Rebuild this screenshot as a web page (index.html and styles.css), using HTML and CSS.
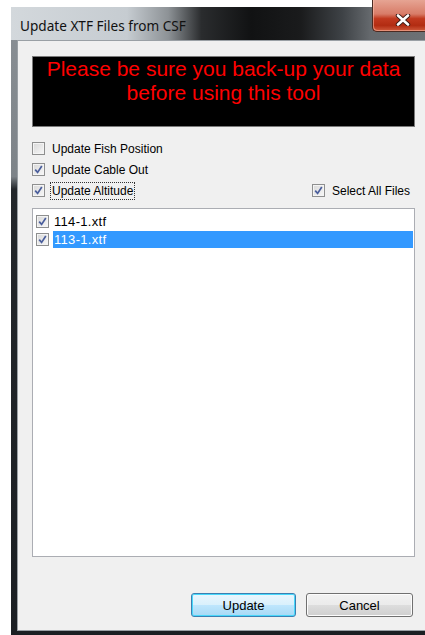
FILE: index.html
```html
<!DOCTYPE html>
<html>
<head>
<meta charset="utf-8">
<title>Update XTF Files from CSF</title>
<link rel="stylesheet" href="styles.css">
</head>
<body>
<div class="window">
  <div class="titlebar">
    <svg class="glass" width="414" height="33" viewBox="0 0 414 33" preserveAspectRatio="none">
      <defs>
        <linearGradient id="glassFill" x1="0" y1="0" x2="1" y2="0">
          <stop offset="0" stop-color="#d3d8dc"/>
          <stop offset="0.28" stop-color="#c6ccd1"/>
          <stop offset="0.38" stop-color="#8d9296"/>
          <stop offset="0.46" stop-color="#2a2c2e"/>
          <stop offset="0.58" stop-color="#111213"/>
          <stop offset="0.70" stop-color="#1a1b1c"/>
          <stop offset="0.80" stop-color="#3e4246"/>
          <stop offset="0.87" stop-color="#666a6e"/>
          <stop offset="1" stop-color="#6d7175"/>
        </linearGradient>
      </defs>
      <rect x="0" y="0" width="414" height="33" fill="url(#glassFill)"/>
    </svg>
    <span class="title">Update XTF Files from CSF</span>
    <div class="close">
      <svg width="16" height="12" viewBox="0 0 16 12">
        <path d="M3 1.5 L13 10.5 M13 1.5 L3 10.5" stroke="#3a1a14" stroke-width="4.4" stroke-linecap="round"/>
        <path d="M3 1.5 L13 10.5 M13 1.5 L3 10.5" stroke="#ffffff" stroke-width="2.6" stroke-linecap="round"/>
      </svg>
    </div>
  </div>
  <div class="client">
    <div class="banner">Please be sure you back-up your data<br>before using this tool</div>

    <div class="options">
      <div class="row">
        <label class="check"><span class="box"></span><span class="text">Update Fish Position</span></label>
      </div>
      <div class="row">
        <label class="check"><span class="box"><svg class="tick" width="9" height="9" viewBox="0 0 9 9"><path d="M1.2 4.6 L3.6 7.4 L7.8 1" fill="none" stroke="#4a5e9c" stroke-width="1.7"/></svg></span><span class="text">Update Cable Out</span></label>
      </div>
      <div class="row spread">
        <label class="check"><span class="box"><svg class="tick" width="9" height="9" viewBox="0 0 9 9"><path d="M1.2 4.6 L3.6 7.4 L7.8 1" fill="none" stroke="#4a5e9c" stroke-width="1.7"/></svg></span><span class="text focus">Update Altitude</span></label>
        <label class="check"><span class="box"><svg class="tick" width="9" height="9" viewBox="0 0 9 9"><path d="M1.2 4.6 L3.6 7.4 L7.8 1" fill="none" stroke="#4a5e9c" stroke-width="1.7"/></svg></span><span class="text">Select All Files</span></label>
      </div>
    </div>

    <div class="list">
      <div class="item">
        <span class="box"><svg class="tick" width="9" height="9" viewBox="0 0 9 9"><path d="M1.2 4.6 L3.6 7.4 L7.8 1" fill="none" stroke="#4a5e9c" stroke-width="1.7"/></svg></span>
        <span class="name">114-1.xtf</span>
      </div>
      <div class="item selected">
        <span class="box"><svg class="tick" width="9" height="9" viewBox="0 0 9 9"><path d="M1.2 4.6 L3.6 7.4 L7.8 1" fill="none" stroke="#4a5e9c" stroke-width="1.7"/></svg></span>
        <span class="name">113-1.xtf</span>
      </div>
    </div>

    <div class="buttons">
      <button class="btn default">Update</button>
      <button class="btn cancel">Cancel</button>
    </div>
  </div>
</div>
</body>
</html>
```
FILE: styles.css
```css
html, body {
  margin: 0;
  padding: 0;
  background: #ffffff;
}

body {
  font-family: "Liberation Sans", Arial, sans-serif;
  font-size: 12px;
  color: #000000;
}

/* Aero-style glass frame, its right edge runs off the page */
.window {
  margin: 7px 0 0 11px;
  width: 414px;
  height: 628px;
  background-color: #1b1f23;
  background-image: linear-gradient(to bottom, #8a9095 0%, #7d8388 27%, #23272b 29%, #1b1f23 100%);
  display: flex;
  flex-direction: column;
}

.titlebar {
  position: relative;
  height: 33px;
  flex: none;
  display: flex;
  align-items: center;
  padding-left: 9px;
  background-color: #2a2c2e;
}

/* glass tint painted under the caption */
.glass {
  position: absolute;
  left: 0;
  top: 0;
  display: block;
}

.title {
  position: relative;
  font-family: "Noto Sans", "Open Sans", sans-serif;
  font-size: 13.6px;
  color: #111;
  margin-top: 3px;
}

.close {
  position: absolute;
  left: 361px;
  top: -7px;
  width: 53px;
  height: 32px;
  border-left: 1px solid #4a2a22;
  border-bottom: 1px solid #4a2a22;
  border-bottom-left-radius: 5px;
  box-shadow: inset 1px -1px 0 rgba(255, 200, 180, 0.5);
  background-color: #c1391f;
  background-image: linear-gradient(to bottom, #e6a493 0%, #d87c68 45%, #c1391f 60%, #b22c12 82%, #cf5a3c 100%);
  display: flex;
  align-items: center;
  justify-content: center;
  padding: 9px 0 0 7px;
  box-sizing: border-box;
}

.client {
  margin-left: 6px;
  height: 591px;
  flex: none;
  box-sizing: border-box;
  border: 1px solid #9aa0a5;
  border-right: none;
  background: #f0f0f0;
  padding: 15px 0 0 14px;
}

.banner {
  width: 383px;
  height: 71px;
  box-sizing: border-box;
  border: 1px solid #7a7a7a;
  background: #000000;
  color: #ff0000;
  font-family: "Liberation Sans", Arial, sans-serif;
  font-size: 21px;
  line-height: 24px;
  text-align: center;
}

.options {
  margin-top: 11px;
  width: 383px;
}

.row {
  height: 21px;
  display: flex;
  align-items: center;
}

.row.spread {
  justify-content: space-between;
  padding-right: 3px;
}

.check {
  display: flex;
  align-items: center;
}

.box {
  width: 13px;
  height: 13px;
  box-sizing: border-box;
  flex: none;
  border: 1px solid #8e8f8f;
  background-color: #e6e6e6;
  background-image: linear-gradient(135deg, #d8d8d8 0%, #e6e6e6 45%, #f8f8f8 100%);
  box-shadow: inset 0 0 0 1px #f4f4f4;
  display: flex;
  align-items: center;
  justify-content: center;
}

.tick {
  display: block;
}

.check .box {
  margin-right: 5px;
}

.text {
  line-height: 16px;
  padding: 0 1px;
  border: 1px solid transparent;
}

.text.focus {
  border: 1px dotted #333;
}

.list {
  margin-top: 7px;
  width: 383px;
  height: 349px;
  box-sizing: border-box;
  border: 1px solid #abadb3;
  background: #ffffff;
  padding: 3px 1px 0 3px;
}

.item {
  height: 18px;
  display: flex;
  align-items: center;
}

.item .box {
  margin-right: 4px;
}

.name {
  flex: 1;
  font-size: 13px;
  letter-spacing: 0.3px;
  line-height: 17px;
  padding-left: 1px;
}

.item.selected .name {
  background: #3399ff;
  color: #ffffff;
}

.buttons {
  margin-top: 36px;
  width: 381px;
  display: flex;
  justify-content: flex-end;
  gap: 10px;
}

.btn {
  height: 24px;
  font-family: "Liberation Sans", Arial, sans-serif;
  font-size: 13px;
  color: #000;
  border-radius: 3px;
  border: 1px solid #707070;
  box-shadow: inset 0 0 0 1px #fcfcfc;
  background-color: #dddddd;
  background-image: linear-gradient(to bottom, #f2f2f2 0%, #ebebeb 50%, #dddddd 51%, #cfcfcf 100%);
  padding: 0;
}

.btn.default {
  width: 105px;
  border-color: #3c7fb1;
  box-shadow: inset 0 0 0 1px #48d8fb;
  background-color: #bee6fd;
  background-image: linear-gradient(to bottom, #eaf6fd 0%, #d9f0fc 50%, #bee6fd 51%, #a7d9f5 100%);
}

.btn.cancel {
  width: 107px;
}
```
